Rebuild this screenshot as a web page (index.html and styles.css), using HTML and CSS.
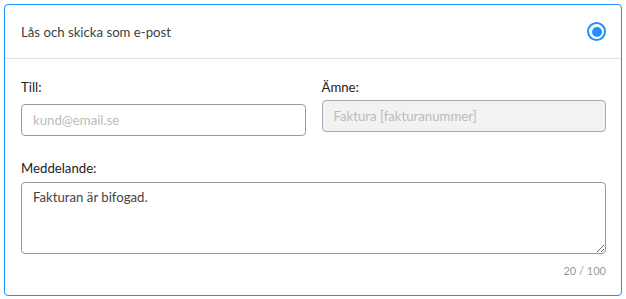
FILE: index.html
```html
<!DOCTYPE html>
<html lang="sv">
<head>
    <meta charset="UTF-8">
    <title>Lås och skicka</title>
    <link rel="stylesheet" href="styles.css">
</head>
<body>
    <div class="card">
        <div class="card-head">
            <span class="card-title">Lås och skicka som e-post</span>
            <span class="radio"></span>
        </div>
        <div class="card-body">
            <div class="row">
                <div class="field">
                    <label for="till">Till:</label>
                    <input type="text" id="till" class="to-input" placeholder="kund@email.se">
                </div>
                <div class="field">
                    <label for="amne">Ämne:</label>
                    <input type="text" id="amne" placeholder="Faktura [fakturanummer]" disabled>
                </div>
            </div>
            <div class="field">
                <label for="msg" class="msg-label">Meddelande:</label>
                <textarea id="msg">Fakturan är bifogad.</textarea>
            </div>
            <div class="counter">20 / 100</div>
        </div>
    </div>
</body>
</html>
```

FILE: styles.css
```css
body {
    margin: 0;
    padding: 4px;
    font-family: Lato, "Open Sans", sans-serif;
    font-size: 13.2px;
    color: #222;
    background: #fff;
}
.card {
    width: 618px;
    height: 292px;
    box-sizing: border-box;
    border: 1px solid #1e90ff;
    border-radius: 4px;
}
.card-head {
    display: flex;
    align-items: center;
    justify-content: space-between;
    height: 53px;
    padding: 0 15px 0 16px;
    border-bottom: 1px solid #e2e2e2;
}
.card-title {
    color: #3a3f45;
}
.radio {
    width: 15px;
    height: 15px;
    border: 2.5px solid #1e90ff;
    border-radius: 50%;
    position: relative;
    background: #fff;
}
.radio::after {
    content: "";
    position: absolute;
    left: 2.5px;
    top: 2.5px;
    width: 10px;
    height: 10px;
    border-radius: 50%;
    background: #1e90ff;
}
.card-body {
    padding: 18px 15px 0 16px;
}
.row {
    display: grid;
    grid-template-columns: 1fr 1fr;
    gap: 16px;
    margin-bottom: 22px;
}
.field label {
    display: block;
    margin-bottom: 3px;
    line-height: 20px;
}
.field .msg-label {
    margin-bottom: 4px;
}
input, textarea {
    display: block;
    width: 100%;
    box-sizing: border-box;
    font-family: inherit;
    font-size: 13.2px;
    border: 1px solid #999;
    border-radius: 4px;
    padding: 0 11px;
    height: 32px;
    color: #444;
    background: #fff;
}
.to-input {
    margin-top: 7px;
}
input::placeholder {
    color: #bbb;
}
input:disabled {
    background: #f2f2f2;
    border-color: #aaa;
}
textarea {
    height: 72px;
    padding: 6px 11px;
    resize: vertical;
}
.counter {
    text-align: right;
    font-size: 11px;
    color: #999;
    margin-top: 10px;
}
```
